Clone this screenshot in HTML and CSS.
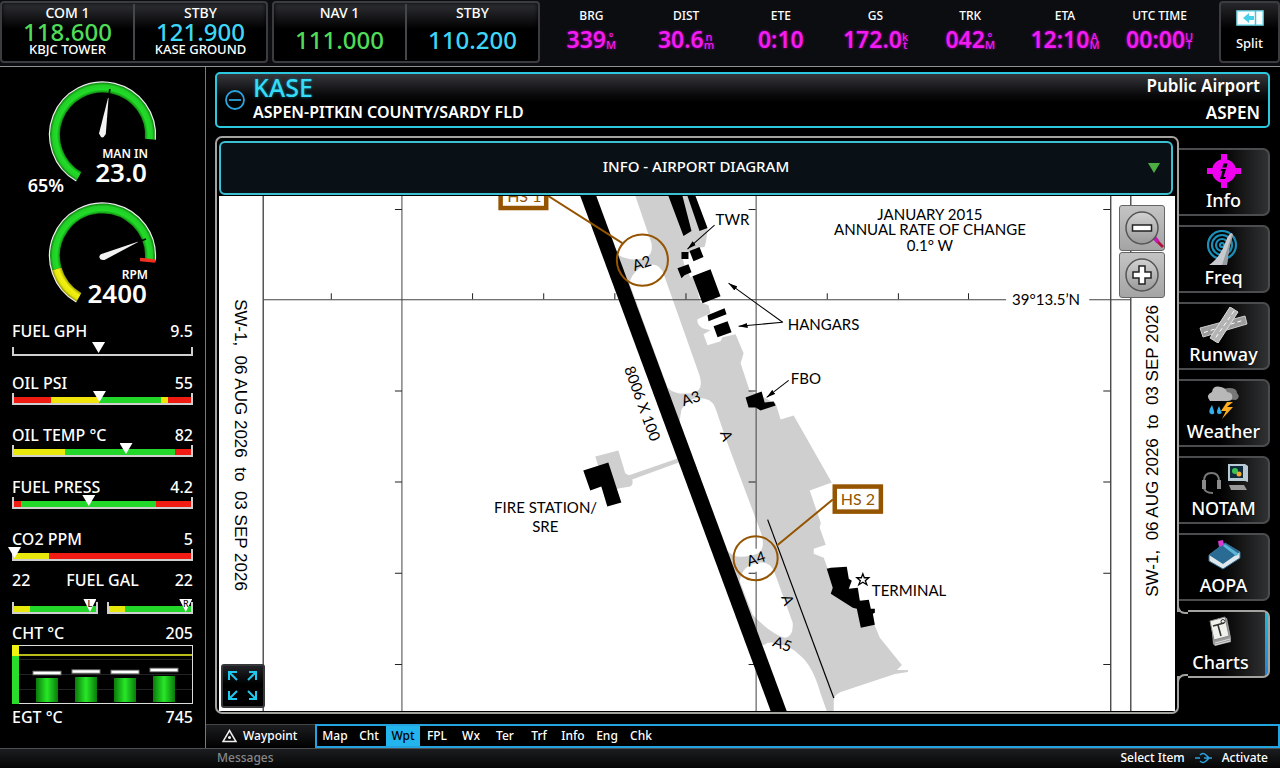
FILE: index.html
```html
<!DOCTYPE html>
<html lang="en">
<head>
<meta charset="utf-8">
<title>KASE Airport Charts</title>
<link rel="stylesheet" href="styles.css">
</head>
<body>
<header class="topbar">
  <div class="radio">
    <button class="freq"><span class="cap">COM 1</span><span class="num green">118.600</span><span class="station">KBJC TOWER</span></button>
    <button class="freq"><span class="cap">STBY</span><span class="num cyan">121.900</span><span class="station">KASE GROUND</span></button>
  </div>
  <div class="radio nav">
    <button class="freq"><span class="cap">NAV 1</span><span class="num green">111.000</span></button>
    <button class="freq"><span class="cap">STBY</span><span class="num cyan">110.200</span></button>
  </div>
  <div class="fields">
    <div class="field"><span class="name">BRG</span><span class="val">339<span class="unit"><i>°</i><i>M</i></span></span></div>
    <div class="field"><span class="name">DIST</span><span class="val">30.6<span class="unit"><i>n</i><i>m</i></span></span></div>
    <div class="field"><span class="name">ETE</span><span class="val">0:10</span></div>
    <div class="field"><span class="name">GS</span><span class="val">172.0<span class="unit"><i>k</i><i>t</i></span></span></div>
    <div class="field"><span class="name">TRK</span><span class="val">042<span class="unit"><i>°</i><i>M</i></span></span></div>
    <div class="field"><span class="name">ETA</span><span class="val">12:10<span class="unit"><i>A</i><i>M</i></span></span></div>
    <div class="field"><span class="name">UTC TIME</span><span class="val">00:00<span class="unit"><i>U</i><i>T</i></span></span></div>
  </div>
  <button class="split">
    <svg width="28" height="16" viewBox="0 0 28 16"><path d="M1 1h26v14H1z" fill="#fff" stroke="#7de3f5" stroke-width="1.5"/><path d="M19.500 1v14" stroke="#3cc8e4" stroke-width="1.500"/><path d="M7 8l6-5v3h5v4h-5v3z" fill="#45cfe8"/></svg>
    <span>Split</span>
  </button>
</header>

<div class="middle">
  <aside class="engine">
    <svg class="gauge" viewBox="0 0 205 121">
      <defs>
        <radialGradient id="gg" gradientUnits="userSpaceOnUse" cx="102.500" cy="60" r="53"><stop offset=".79" stop-color="#0c7a0c"/><stop offset=".86" stop-color="#22dc28"/><stop offset=".94" stop-color="#20d026"/><stop offset="1" stop-color="#0c700c"/></radialGradient>
        <radialGradient id="gy" gradientUnits="userSpaceOnUse" cx="102.500" cy="60" r="53"><stop offset=".79" stop-color="#8a8a00"/><stop offset=".86" stop-color="#f2f210"/><stop offset=".94" stop-color="#e8e80c"/><stop offset="1" stop-color="#808000"/></radialGradient>
      </defs>
      <path d="M78.800 101.600A47.800 47.800 0 1 1 150.100 64.200" fill="none" stroke="url(#gg)" stroke-width="10.500"/>
      <path d="M76.300 106A53 53 0 1 1 155.300 64.600" fill="none" stroke="#eee" stroke-width="1.200"/>
      <path d="M108.800 20L105.800 59Q103.500 63.500 101 62L99 58.500Z" fill="#f3f3f3"/>
      <path d="M109.800 14l-1 9" stroke="#000" stroke-width="1.600"/>
      <text class="g-label" x="148" y="83">MAN IN</text><text class="g-value" x="147" y="107">23.0</text><text class="g-pct" x="64" y="117">65%</text>
    </svg>
    <svg class="gauge" viewBox="0 0 205 121">
      <path d="M56.500 73A47.800 47.800 0 1 1 150.100 64.200" fill="none" stroke="url(#gg)" stroke-width="10.500"/>
      <path d="M78.800 101.600A47.800 47.800 0 0 1 56.500 73" fill="none" stroke="url(#gy)" stroke-width="10.500"/>
      <path d="M76.300 106A53 53 0 1 1 155.300 64.600" fill="none" stroke="#eee" stroke-width="1.200"/>
      <path d="M140 63.500l15.500 1.500" stroke="#f03020" stroke-width="3.500"/>
      <path d="M140 45L104.500 64Q99.500 64.500 99.300 60.500Q100 58 103 57.500Z" fill="#f3f3f3"/>
      <path d="M146 43l-8 3" stroke="#000" stroke-width="1.600"/>
      <text class="g-label" x="148" y="83">RPM</text><text class="g-value" x="147" y="107">2400</text>
    </svg>
    <div class="meters">
      <div class="meter"><div class="row"><span>FUEL GPH</span><span>9.5</span></div><div class="scale empty"><b style="left:47.500%"></b></div></div>
      <div class="meter"><div class="row"><span>OIL PSI</span><span>55</span></div><div class="scale"><div class="band psi"></div><b style="left:48%"></b></div></div>
      <div class="meter"><div class="row"><span>OIL TEMP °C</span><span>82</span></div><div class="scale"><div class="band temp"></div><b style="left:63%"></b></div></div>
      <div class="meter"><div class="row"><span>FUEL PRESS</span><span>4.2</span></div><div class="scale"><div class="band press"></div><b style="left:42%"></b></div></div>
      <div class="meter"><div class="row"><span>CO2 PPM</span><span>5</span></div><div class="scale"><div class="band co"></div><b style="left:0"></b></div></div>
    </div>
    <div class="row"><span>22</span><span>FUEL GAL</span><span>22</span></div>
    <div class="tanks">
      <div class="scale"><div class="band fuel"></div><b style="left:92%"></b><em style="left:92%">L</em></div>
      <div class="scale"><div class="band fuel"></div><b style="left:93%"></b><em style="left:93%">R</em></div>
    </div>
    <div class="row"><span>CHT °C</span><span>205</span></div>
    <svg class="cht" viewBox="0 0 181 59">
      <defs><linearGradient id="cyl"><stop offset="0" stop-color="#0a7a0a"/><stop offset=".5" stop-color="#28e828"/><stop offset="1" stop-color="#0a7a0a"/></linearGradient></defs>
      <path d="M7 14.500h173M7 29.500h173M7 44.500h173" stroke="#242426"/>
      <rect x=".5" y=".5" width="180" height="58" fill="none" stroke="#ddd"/>
      <path d="M0 0h7v11H0z" fill="#f2f210"/><path d="M0 11h7v48H0z" fill="#2bdd2b"/>
      <path d="M7 10h173" stroke="#baba18" stroke-width="2"/>
      <rect x="24" y="33" width="22" height="24" fill="url(#cyl)"/><rect x="63" y="32" width="22" height="25" fill="url(#cyl)"/><rect x="102" y="33" width="22" height="24" fill="url(#cyl)"/><rect x="141" y="31" width="22" height="26" fill="url(#cyl)"/>
      <path d="M20.500 28h29M59.500 26.500h29M98.500 27h29M137.500 25h29" stroke="#777" stroke-width="4.500"/>
      <path d="M21.500 28h27M60.500 26.500h27M99.500 27h27M138.500 25h27" stroke="#fff" stroke-width="2.500"/>
    </svg>
    <div class="row"><span>EGT °C</span><span>745</span></div>
  </aside>

  <section class="content">
    <div class="airport">
      <button class="collapse" aria-label="Collapse"><svg width="20" height="20" viewBox="0 0 20 20" fill="none" stroke="#2ba3de" stroke-width="1.800"><circle cx="10" cy="10" r="9"/><path d="M4 10h12"/></svg></button>
      <div class="ident"><h1>KASE</h1><p>ASPEN-PITKIN COUNTY/SARDY FLD</p></div>
      <div class="kind"><p>Public Airport</p><p>ASPEN</p></div>
    </div>
    <div class="work">
      <main class="panel">
        <div class="picker">
          <select aria-label="Chart"><option>INFO - AIRPORT DIAGRAM</option></select>
          <svg width="12" height="10" viewBox="0 0 12 10"><path d="M0 0h12L6 10z" fill="#4cae42"/></svg>
        </div>
        <div class="chart">
          <svg class="diagram" viewBox="219 196 955 514" preserveAspectRatio="xMidYMid slice">
            <defs><marker id="arr" viewBox="0 0 9 6" refX="9" refY="3" markerWidth="9" markerHeight="6" markerUnits="userSpaceOnUse" orient="auto"><path d="M0 0.500L9 3L0 5.500z"/></marker></defs>
            <rect x="219" y="196" width="955" height="514" fill="#fff"/>
            <path fill="#cfcfcf" d="M590 196H694L707 228Q706 242 704 247L695 248L682 258L684 265L690 277L683 280L693 276L700 302L708 305L710 313L697 319Q696 324 702 328L710 330L703 334L707 345L720 341L722 337L735 334L743 353L740 363L749 390L775 403L780 419L793 415L831 482L809 490L820 522L819 527L825 544L813 548V553L823 557L827 568L860 600L874 625L879 637L901 664L896 669H907V671L894 673L840 691Q833 694 833 700V710H826L820 693Q812 665 800 655Q790 645 776 643Q768 640 764 644H758Z"/>
            <g fill="#fff">
              <path d="M590 196H635L651 243Q653 254 645 258Q630 262 618 255Z"/>
              <path d="M629 283Q631 274 639 268Q659 258 664 276L699 375Q704 392 690 393H679Q671 392 667 387Z"/>
              <path d="M679 421L681 409Q686 400 694 398Q711 396 715 408L727 443L760 531Q765 545 759 552Q750 556 740 556Q732 556 727 550Z"/>
              <path d="M739 580Q741 570 748 565Q768 556 774 572L792 622Q793 636 784 637Q769 632 752 614Z"/>
            </g>
            <g fill="#cfcfcf"><path d="M595 456L618 450L625 473L631 476Q634 484 630 486L612 489L603 482Z"/><path d="M628 475L680 457L681 461L629 480Z"/></g>
            <path d="M263.500 196V710M1109.500 196V710M1129.500 196V710" stroke="#000"/>
            <path d="M402 196V710M755.500 196V548M755.500 571V710M264 299.500H1005M1088 299.500H1129" stroke="#444" fill="none"/>
            <path d="M331.500 299v-6M472.500 299v-6M543.500 299v-6M614.500 299v-6M685.500 299v-6M826.500 299v-6M897.500 299v-6M967.500 299v-6M402 209.500h-7M402 390.500h-7M402 481.500h-7M402 572.500h-7M402 663.500h-7M755 209.500h-7M755 390.500h-7M755 481.500h-7M755 572.500h-7M755 663.500h-7M1109 209.500h-7M1109 390.500h-7M1109 481.500h-7M1109 572.500h-7M1109 663.500h-7" stroke="#222"/>
            <path d="M580 196H596L786 710H770Z"/>
            <path d="M668 196H682L691 231L683 236ZM687 196H695L707 228L699 231ZM681 252h7v7h-7ZM689 251L699 247L703 257L693 261ZM677 268L688 264L691 272L684 275L681 278ZM692 276L710 269L720 296L702 303ZM707 315L724 308L726 314L708 321ZM713 326L727 321L731 332L717 337ZM745 397L761 391L764 402L773 401L775 405L760 410L755 407L748 407ZM583 470L608 462L621 502L607 506L601 486L590 490ZM826 568L830 567L846 566L848 578L851 580L848 588L857 587L859 600L868 599L870 608L874 608V612L872 613L874 624L860 627L856 608L852 607L830 593L832 587Z"/>
            <path d="M767 519L833 697" stroke="#000" stroke-width="1.200"/>
            <path d="M862 573L863.500 577H868L864.500 580L866 584L862 581.500L858 584L859.500 580L856 577H860.500Z" fill="#fff" stroke="#000" stroke-width="1.300"/>
            <g stroke="#000"><path d="M714 225L687 249" marker-end="url(#arr)"/><path d="M782 322L728 283" marker-end="url(#arr)"/><path d="M782 322L738 326" marker-end="url(#arr)"/><path d="M788 380L766 397" marker-end="url(#arr)"/></g>
            <g stroke="#945400" fill="none" stroke-width="2"><circle cx="642" cy="260" r="25.500"/><circle cx="755" cy="557.500" r="22"/><path d="M548 196L622 243M832 499L776 545"/></g>
            <g stroke="#945400" fill="#fff" stroke-width="4.500"><rect x="500.500" y="182" width="45.500" height="26"/><rect x="834" y="486" width="46" height="25"/></g>
            <g class="brown"><text x="507" y="202">HS 1</text><text x="840" y="504">HS 2</text></g>
            <g class="ct">
              <text x="715" y="225">TWR</text><text x="787" y="330">HANGARS</text><text x="790" y="384">FBO</text><text x="871" y="595">TERMINAL</text><text x="494" y="512">FIRE STATION/</text><text x="532" y="531">SRE</text>
              <text x="929" y="220" text-anchor="middle">JANUARY 2015</text><text x="929" y="235" text-anchor="middle">ANNUAL RATE OF CHANGE</text><text x="929" y="251" text-anchor="middle">0.1° W</text><text x="1011" y="305">39°13.5’N</text>
              <g text-anchor="middle"><text transform="translate(643 268) rotate(-18)">A2</text><text transform="translate(692 403) rotate(-18)">A3</text><text transform="translate(757 563) rotate(-18)">A4</text><text transform="translate(780 648) rotate(20)">A5</text><text transform="translate(721 437) rotate(70)">A</text><text transform="translate(782 601) rotate(70)">A</text><text transform="translate(637 405) rotate(70)">8006 X 100</text></g>
            </g>
            <g class="edge"><text transform="translate(235 299) rotate(90)">SW-1,&#160; 06 AUG 2026&#160; to&#160; 03 SEP 2026</text><text transform="translate(1157 596) rotate(-90)">SW-1,&#160; 06 AUG 2026&#160; to&#160; 03 SEP 2026</text></g>
          </svg>
          <div class="zoom">
            <button aria-label="Zoom out"><svg width="44" height="44" viewBox="0 0 44 44"><path d="M35 33l8 8" stroke="#b3123f" stroke-width="3"/><path d="M34 31l4 5" stroke="#c41bb0" stroke-width="4"/><circle cx="22" cy="22" r="16" fill="url(#disc)" stroke="#555" stroke-width="1.500"/><path d="M12.500 19h19v6h-19z" fill="#fff" stroke="#222" stroke-width="1.500"/><defs><linearGradient id="disc" x1="0" y1="0" x2="0" y2="1"><stop offset="0" stop-color="#d2d2d2"/><stop offset="1" stop-color="#999"/></linearGradient></defs></svg></button>
            <button aria-label="Zoom in"><svg width="44" height="44" viewBox="0 0 44 44"><circle cx="22" cy="22" r="16" fill="url(#disc)" stroke="#555" stroke-width="1.500"/><path d="M19 13h6v6h6v6h-6v6h-6v-6h-6v-6h6z" fill="#fff" stroke="#222" stroke-width="1.500"/></svg></button>
          </div>
          <button class="expand" aria-label="Full screen"><svg width="32" height="32" viewBox="0 0 32 32" fill="none" stroke="#1fc8ec" stroke-width="2"><path d="M10 2H2v8M2 2l8 8M22 2h7v8M29 2l-8 8M2 21v8h8M2 29l8-8M29 21v8h-7M29 29l-8-8"/></svg></button>
        </div>
      </main>
      <nav class="sidetabs">
        <button><svg width="38" height="36" viewBox="0 0 38 36"><circle cx="19" cy="18" r="12" fill="#f000f0"/><path d="M16 1h6v6h-6zM16 29h6v6h-6zM2 15h6v6H2zM30 15h6v6h-6z" fill="#f000f0"/><path d="M18.500 10.500h4l-1 4h-4zM16 16h5l-2.500 8h2.500l-1 2h-5l2.500-8h-2z"/></svg><span>Info</span></button>
        <button><svg width="38" height="36" viewBox="0 0 38 36"><g fill="none" stroke="#1b8fb8" stroke-width="2.200"><circle cx="17" cy="15" r="14"/><circle cx="17" cy="15" r="10"/><circle cx="17" cy="15" r="6"/><circle cx="17" cy="15" r="2"/></g><path d="M27 3Q24 3 21 11Q15 28 4 35H22Q24 15 28 5Z" fill="#c6cace"/><path d="M27 4Q22 20 17 35h5Q24 15 28 5Z" fill="#989da2"/></svg><span>Freq</span></button>
        <button><svg width="50" height="36" viewBox="0 0 50 36"><path d="M1 21L46 9l2 8L4 30Z" fill="#9d9d9d" stroke="#ccc"/><path d="M5 25.500L45 13" stroke="#fff" stroke-dasharray="4 3"/><path d="M31 0l8 5L19 36l-8-5Z" fill="#b4b4b4" stroke="#ddd"/><path d="M35 4L15 33" stroke="#fff" stroke-dasharray="4 3"/></svg><span>Runway</span></button>
        <button><svg width="38" height="36" viewBox="0 0 38 36"><path d="M17 15Q14 4 24 4Q32 4 32 9Q36 13 31 16Z" fill="#777"/><path d="M5 17Q0 11 7 8Q8 1 16 3Q21 4 22 8Q29 9 27 15Q26 17 23 17Z" fill="#b8b8b8"/><path d="M7 21q-5 8-1 9t3-3zM14 22q-4 8 0 8t2-3z" fill="#32afea"/><path d="M22 18l-6 9h5l-4 8 11-12h-6l6-5z" fill="#ffad20"/></svg><span>Weather</span></button>
        <button><svg width="50" height="36" viewBox="0 0 50 36"><path d="M5 24V20Q5 12 12.500 12T20 20v4M5 26q0 6 9 6" fill="none" stroke="#777" stroke-width="2"/><path d="M3 19h4v9H3zM18 19h4v9h-4z" fill="#8a8a8a"/><path d="M29 3h17l3 2v16l-3-1H29z" fill="#b9cad4"/><path d="M31 5h13v12H31z" fill="#102b3c"/><circle cx="36" cy="10" r="3" fill="#39c353"/><circle cx="40" cy="13" r="2.500" fill="#f0aa32"/><path d="M30 24h15l3 5H32z" fill="#999"/></svg><span>NOTAM</span></button>
        <button><svg width="38" height="36" viewBox="0 0 38 36"><path d="M4 17L20 5 35 14v6L18 31 4 23Z" fill="#dfe8ec" stroke="#356d91"/><path d="M4 17L20 5 35 14 18 26Z" fill="#2a6b93"/><path d="M20 6l14 10-3 2L18 8z" fill="#5bb6d7"/><path d="M13 3l5-1 1 5-5 2z" fill="#d73bcf"/></svg><span>AOPA</span></button>
        <button class="on"><svg width="38" height="36" viewBox="0 0 38 36"><path d="M9 7l16-4 4 20v4l-16 4-2-2z" fill="#999"/><path d="M8 6l15-4 4 19-15 4z" fill="#f0f0ec" stroke="#888"/><path d="M11 11l11-3M16 10l3 11" stroke="#333" stroke-width="1.600"/><circle cx="21" cy="6.500" r="2" fill="none" stroke="#333"/><path d="M13 28l15-4M13 30l15-4" stroke="#ddd"/></svg><span>Charts</span></button>
      </nav>
    </div>
    <div class="pages">
      <div class="group"><svg width="15" height="14" viewBox="0 0 15 14" fill="none" stroke="#eee" stroke-width="1.500"><path d="M7.500 1.500L14 12.500H1z"/><circle cx="7.500" cy="8.500" r=".8"/></svg>Waypoint</div>
      <nav class="strip"><button>Map</button><button>Cht</button><button class="on">Wpt</button><button>FPL</button><button>Wx</button><button>Ter</button><button>Trf</button><button>Info</button><button>Eng</button><button>Chk</button></nav>
    </div>
  </section>
</div>
<footer class="status"><span class="msg">Messages</span><span class="hint">Select Item <svg width="17" height="12" viewBox="0 0 17 12" fill="none" stroke="#2ba3de" stroke-width="1.500"><path d="M0 6h5M9 6h8M5 3Q8 0 11 3L14 6L11 9Q8 12 5 9"/></svg> Activate</span></footer>
</body>
</html>
```
FILE: styles.css
```css
* { box-sizing: border-box; }
body {
  margin: 0; min-height: 100vh; display: flex; flex-direction: column;
  background: #000; color: #fff;
  font-family: "Noto Sans", "DejaVu Sans", sans-serif; font-weight: 500; font-size: 15px;
}
button, select { font: inherit; color: inherit; border: 0; padding: 0; background: none; }
h1, p { margin: 0; }
svg { display: block; flex: none; }

.topbar { display: flex; gap: 4px; height: 67px; padding-top: 1px; background: #0b0d11; border-bottom: 1px solid #8d8f91; }
.radio { flex: 0 0 268px; display: flex; height: 62px; padding: 1px 0; border: 2px solid #3a3c40; border-radius: 4px; background: linear-gradient(#303136, #000 45%); box-shadow: inset 0 0 4px #000; }
.freq { flex: 1; display: flex; flex-direction: column; align-items: center; }
.freq + .freq { border-left: 2px solid #44464a; }
.cap { font-size: 14px; line-height: 18px; }
.num { font-size: 24px; line-height: 20px; }
.station { font-size: 13px; line-height: 14px; }
.nav .num { margin-top: 8px; }
.green { color: #50dc58; }
.cyan { color: #3fd6f5; }
.fields { flex: 1; display: flex; padding: 6px 8px 0 0; }
.field { flex: 1; display: flex; flex-direction: column; align-items: center; }
.name { font-size: 12px; line-height: 18px; }
.val { display: flex; align-items: center; font-size: 23px; line-height: 28px; font-weight: 600; color: #f21cf2; text-shadow: 0 0 3px #a000a0; }
.unit { display: flex; flex-direction: column; align-items: center; padding-top: 3px; font-size: 11px; line-height: 8px; font-weight: 500; }
.unit i { font-style: normal; }
.split { flex: 0 0 61px; height: 62px; border: 2px solid #3a3c40; border-radius: 4px; background: linear-gradient(#26272b, #000 45%); display: flex; flex-direction: column; align-items: center; gap: 8px; padding-top: 7px; font-size: 13px; }

.middle { flex: 1; display: flex; }
.engine { flex: 0 0 206px; min-width: 0; border-right: 1px solid #77797b; padding: 8px 12px 0; }
.gauge { width: 205px; height: 121px; margin-left: -12px; fill: #fff; overflow: visible; font-weight: 600; }
.g-label, .g-value, .g-pct { text-anchor: end; }
.g-label { font-size: 12px; }
.g-value { font-size: 26px; }
.g-pct { font-size: 18px; }
.row { display: flex; justify-content: space-between; font-size: 16px; line-height: 16px; }
.meters { padding-top: 6px; }
.meter { height: 52px; }
.scale { position: relative; height: 12px; margin-top: 2px; padding-top: 4px; border: 2px solid #d0d0d0; border-top: 0; }
.scale.empty { height: 9px; margin-top: 8px; }
.scale b { position: absolute; top: -2px; width: 13px; height: 11px; margin-left: -6px; background: #fff; clip-path: polygon(0 0, 100% 0, 50% 100%); }
.scale.empty b { top: -5px; }
.scale em { position: absolute; top: -3px; width: 13px; margin-left: -6px; text-align: center; font-style: normal; font-size: 9px; line-height: 10px; color: #111; }
.band { height: 6px; }
.psi { background: linear-gradient(90deg, #f01c14 21%, #f0e40c 21% 48%, #22d62a 48% 83%, #f0e40c 83% 87%, #f01c14 87%); }
.temp { background: linear-gradient(90deg, #e8e80c 29%, #22d62a 29% 91%, #f01c14 91%); }
.press { background: linear-gradient(90deg, #f01c14 4%, #22d62a 4% 80%, #f01c14 80%); }
.co { background: linear-gradient(90deg, #e8e80c 20%, #f01c14 20%); }
.fuel { background: linear-gradient(90deg, #e8e80c 20%, #22d62a 20%); }
.meters + .row { margin-top: -11px; }
.tanks { display: grid; grid-template-columns: 1fr 1fr; gap: 9px; margin: 14px 0 11px; }
.tanks .scale { margin: 0; }
.tanks .scale b { top: -3px; height: 13px; }
.cht { width: 100%; margin: 4px 0 5px; }

.content { flex: 1; min-width: 0; display: flex; flex-direction: column; }
.airport { display: flex; align-items: center; height: 56px; margin: 5px 10px 8px 9px; padding: 0 8px; border: 2px solid #2cc8e0; border-radius: 5px; background: linear-gradient(#36373c, #0a0a0c 40%, #000 55%); }
.ident { flex: 1; margin-left: 8px; padding-bottom: 2px; }
.ident h1 { font-size: 25px; line-height: 26px; font-weight: 500; color: #35dcf8; text-shadow: 0 0 3px #047488; }
.ident p { font-size: 16px; line-height: 24px; font-weight: 600; }
.kind { text-align: right; padding-bottom: 3px; font-size: 17px; line-height: 27px; font-weight: 600; }
.work { flex: 1; display: flex; margin: 0 10px 0 9px; }
.panel { flex: 1; min-width: 0; display: flex; flex-direction: column; padding: 3px 2px 1px; border: 2px solid #a3a39f; border-radius: 7px; }
.picker { position: relative; margin-bottom: 1px; margin-right: 2px; }
.picker select { display: block; width: 100%; height: 54px; padding-bottom: 4px; appearance: none; border: 2px solid #3cc0d4; border-radius: 6px; background: #0a1116; text-align: center; text-align-last: center; }
.picker svg { position: absolute; right: 13px; top: 22px; pointer-events: none; }
.chart { position: relative; flex: 1; min-height: 0; background: #fff; }
.diagram { position: absolute; width: 100%; height: 100%; }
.ct { font-family: Lato, sans-serif; font-size: 15px; font-weight: 400; }
.brown { font-family: Lato, sans-serif; font-size: 16px; font-weight: 400; fill: #945400; }
.edge { font-family: "Liberation Sans", sans-serif; font-size: 17px; font-weight: 400; }
.zoom { position: absolute; right: 10px; top: 9px; display: grid; gap: 1px; }
.zoom button { width: 46px; height: 46px; border: 1px solid #666; border-radius: 3px; background: linear-gradient(#c4c4c4, #a4a4a4); }
.expand { position: absolute; left: 2px; bottom: 3px; width: 44px; height: 44px; display: grid; place-items: center; border: 2px solid #35373a; border-radius: 3px; background: linear-gradient(#222327, #000 45%); }
.sidetabs { flex: 0 0 91px; display: flex; flex-direction: column; gap: 9px; padding-top: 12px; }
.sidetabs button { position: relative; z-index: 1; display: flex; flex-direction: column; align-items: center; height: 68px; padding-top: 3px; border: 2px solid #4b4c4e; border-left: 0; border-radius: 0 7px 7px 0; background: linear-gradient(90deg, #000 45%, #303132); font-size: 18px; line-height: 22px; text-shadow: 0 0 2px #000; }
.sidetabs .on { margin-left: -2px; border-color: #a3a39f; padding-right: 4px; background: linear-gradient(#18bcd8, #2a80d8) right / 3px 100% no-repeat, linear-gradient(90deg, #000 45%, #303132); }
.sidetabs .on::before, .sidetabs .on::after { content: ""; position: absolute; left: 0; width: 9px; height: 9px; border-left: 2px solid #a3a39f; background: #000; }
.sidetabs .on::before { top: -9px; border-bottom: 2px solid #a3a39f; border-bottom-left-radius: 8px; }
.sidetabs .on::after { bottom: -9px; border-top: 2px solid #a3a39f; border-top-left-radius: 8px; }
.pages { display: flex; height: 24px; margin-top: 10px; font-size: 12px; }
.group { flex: 0 0 109px; display: flex; align-items: center; gap: 6px; padding: 0 0 2px 16px; border-top: 1px solid #444; background: linear-gradient(#1c1d20, #000); }
.strip { flex: 1; display: flex; padding-left: 1px; border: 2px solid #23a4e0; background: #000; }
.strip button { width: 34px; padding-bottom: 2px; }
.strip .on { color: #000; background: #23b4ee; }
.status { display: flex; justify-content: space-between; align-items: center; height: 20px; padding: 0 12px 2px 217px; border-top: 1px solid #4c4e50; background: linear-gradient(#1c1d20, #050505); font-size: 12px; }
.msg { color: #86888a; }
.hint { display: flex; align-items: center; gap: 10px; }
```
